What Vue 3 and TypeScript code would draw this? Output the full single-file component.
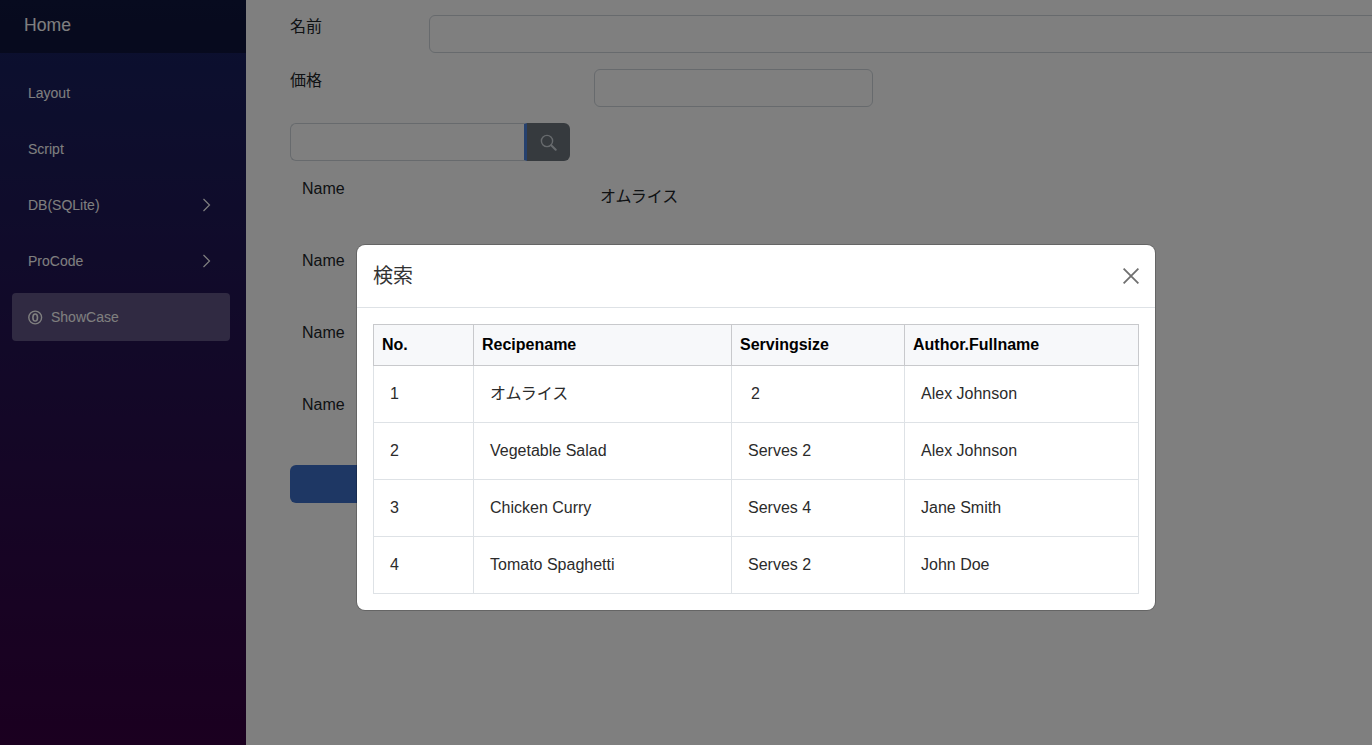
<script setup lang="ts">
interface Recipe {
  no: number;
  name: string;
  size: string;
  author: string;
}

const navItems = [
  { label: "Layout", arrow: false },
  { label: "Script", arrow: false },
  { label: "DB(SQLite)", arrow: true },
  { label: "ProCode", arrow: true },
];

const recipes: Recipe[] = [
  { no: 1, name: "オムライス", size: "2", author: "Alex Johnson" },
  { no: 2, name: "Vegetable Salad", size: "Serves 2", author: "Alex Johnson" },
  { no: 3, name: "Chicken Curry", size: "Serves 4", author: "Jane Smith" },
  { no: 4, name: "Tomato Spaghetti", size: "Serves 2", author: "John Doe" },
];

const nameRows = ["オムライス", "", "", ""];
</script>

<template>
  <div class="page">
    <aside class="sidebar">
      <div class="brand">Home</div>
      <nav class="nav">
        <a v-for="item in navItems" :key="item.label" class="nav-item">
          <span>{{ item.label }}</span>
          <svg v-if="item.arrow" class="chevron" width="16" height="16" viewBox="0 0 16 16">
            <path d="M5.5 2 11.5 8 5.5 14" fill="none" stroke="currentColor" stroke-width="1.2" />
          </svg>
        </a>
        <a class="nav-item is-active">
          <svg class="nav-icon" width="15" height="15" viewBox="0 0 15 15">
            <circle cx="7.2" cy="7.5" r="6.4" fill="none" stroke="currentColor" stroke-width="1.4" />
            <ellipse cx="7.2" cy="7.5" rx="2.3" ry="3.5" fill="none" stroke="currentColor" stroke-width="1.6" />
          </svg>
          <span>ShowCase</span>
        </a>
      </nav>
    </aside>

    <main class="content">
      <div class="form-row">
        <label class="form-label">名前</label>
        <input class="input input-name" type="text" />
      </div>
      <div class="form-row">
        <label class="form-label label-price">価格</label>
        <input class="input input-price" type="text" />
      </div>
      <div class="search-row">
        <input class="input input-search" type="text" />
        <button class="search-btn" type="button">
          <svg width="17" height="17" viewBox="0 0 17 17">
            <circle cx="7" cy="7" r="5.6" fill="none" stroke="currentColor" stroke-width="1.4" />
            <path d="M11.2 11.2 15.7 15.7" fill="none" stroke="currentColor" stroke-width="2" stroke-linecap="round" />
          </svg>
        </button>
      </div>
      <div class="name-list">
        <div v-for="(value, i) in nameRows" :key="i" class="name-row">
          <span class="name-label">Name</span>
          <span class="name-value">{{ value }}</span>
        </div>
      </div>
      <button class="submit-btn" type="button"></button>
    </main>

    <div class="backdrop"></div>

    <div class="modal-wrap">
      <section class="modal">
        <header class="modal-header">
          <h5 class="modal-title">検索</h5>
          <svg class="close" width="16" height="16" viewBox="0 0 16 16">
            <path d="M.6.6 15.4 15.4M15.4.6.6 15.4" fill="none" stroke="currentColor" stroke-width="1.8" />
          </svg>
        </header>
        <div class="modal-body">
          <table class="table">
            <colgroup>
              <col style="width: 100px" />
              <col style="width: 258px" />
              <col style="width: 173px" />
              <col style="width: 234px" />
            </colgroup>
            <thead>
              <tr>
                <th>No.</th>
                <th>Recipename</th>
                <th>Servingsize</th>
                <th>Author.Fullname</th>
              </tr>
            </thead>
            <tbody>
              <tr v-for="r in recipes" :key="r.no">
                <td>{{ r.no }}</td>
                <td>{{ r.name }}</td>
                <td :class="{ 'size-bare': r.no === 1 }">{{ r.size }}</td>
                <td>{{ r.author }}</td>
              </tr>
            </tbody>
          </table>
        </div>
      </section>
    </div>
  </div>
</template>

<style>
html,
body {
  margin: 0;
  overflow: hidden;
}
</style>

<style scoped>
.page {
  display: flex;
  width: 1372px;
  height: 745px;
  overflow: hidden;
  position: relative;
  background: #fff;
  color: #212529;
  font-family: "Liberation Sans", "Noto Sans CJK JP", sans-serif;
  font-size: 16px;
  line-height: 24px;
}

.sidebar {
  width: 246px;
  flex: none;
  background: linear-gradient(180deg, #162260 0%, #360040 100%);
  color: #fff;
}

.brand {
  height: 53px;
  box-sizing: border-box;
  padding: 13px 24px;
  font-size: 17.6px;
  background: rgba(0, 0, 0, 0.35);
}

.nav {
  display: flex;
  flex-direction: column;
  gap: 8px;
  padding: 16px 16px 0 12px;
}

.nav-item {
  display: flex;
  align-items: center;
  justify-content: space-between;
  height: 48px;
  padding: 0 16px;
  font-size: 14px;
  border-radius: 4px;
}

.is-active {
  justify-content: flex-start;
  gap: 8px;
  background: #605484;
}

.content {
  flex: 1;
  min-width: 0;
  box-sizing: border-box;
  padding: 15px 0 0 44px;
}

.form-row {
  display: flex;
  height: 38px;
  margin-bottom: 16px;
}

.form-label {
  width: 139px;
  flex: none;
  line-height: 24px;
}

.label-price {
  width: 304px;
}

.input {
  box-sizing: border-box;
  height: 38px;
  border: 1px solid #ced4da;
  border-radius: 6px;
  background: #fff;
  padding: 6px 12px;
  outline: none;
}

.input-name {
  width: 1100px;
  flex: none;
}

.input-price {
  width: 279px;
}

.search-row {
  display: flex;
  width: 280px;
}

.input-search {
  width: 237px;
  border-right: 3px solid #4c82dc;
  border-radius: 6px 0 0 6px;
}

.search-btn {
  width: 43px;
  height: 38px;
  padding: 0;
  border: none;
  border-radius: 0 6px 6px 0;
  background: #6c757d;
  color: #ced4da;
  display: flex;
  align-items: center;
  justify-content: center;
}

.name-list {
  margin-top: 16px;
}

.name-row {
  display: flex;
  height: 72px;
  padding-left: 12px;
}

.name-label {
  width: 298px;
  flex: none;
}

.name-value {
  padding-top: 8px;
}

.submit-btn {
  display: block;
  width: 140px;
  height: 38px;
  border: none;
  border-radius: 6px;
  background: #3c6ec8;
}

.backdrop {
  position: absolute;
  inset: 0;
  background: rgba(0, 0, 0, 0.5);
}

.modal-wrap {
  position: absolute;
  inset: 0;
  display: flex;
  justify-content: center;
  align-items: flex-start;
  padding: 245px 0 0 140px;
  box-sizing: border-box;
}

.modal {
  width: 798px;
  background: #fff;
  border-radius: 8px;
  box-shadow: 0 0 0 1px rgba(0, 0, 0, 0.2);
}

.modal-header {
  display: flex;
  align-items: center;
  justify-content: space-between;
  height: 62px;
  padding: 0 16px;
  border-bottom: 1px solid #dee2e6;
}

.modal-title {
  margin: 0;
  font-size: 20px;
  font-weight: 400;
  line-height: 30px;
  color: #333;
}

.close {
  color: #6f6f6f;
}

.modal-body {
  padding: 16px;
}

.table {
  width: 765px;
  border-collapse: collapse;
  table-layout: fixed;
  color: #2b2b2b;
}

.table th {
  height: 40px;
  padding: 0 8px;
  text-align: left;
  font-weight: 700;
  color: #000;
  background: #f7f8fa;
  border: 1px solid #c8c9cc;
}

.table td {
  height: 56px;
  padding: 0 16px;
  border: 1px solid #dee2e6;
}

.table td.size-bare {
  padding-left: 19px;
}
</style>
